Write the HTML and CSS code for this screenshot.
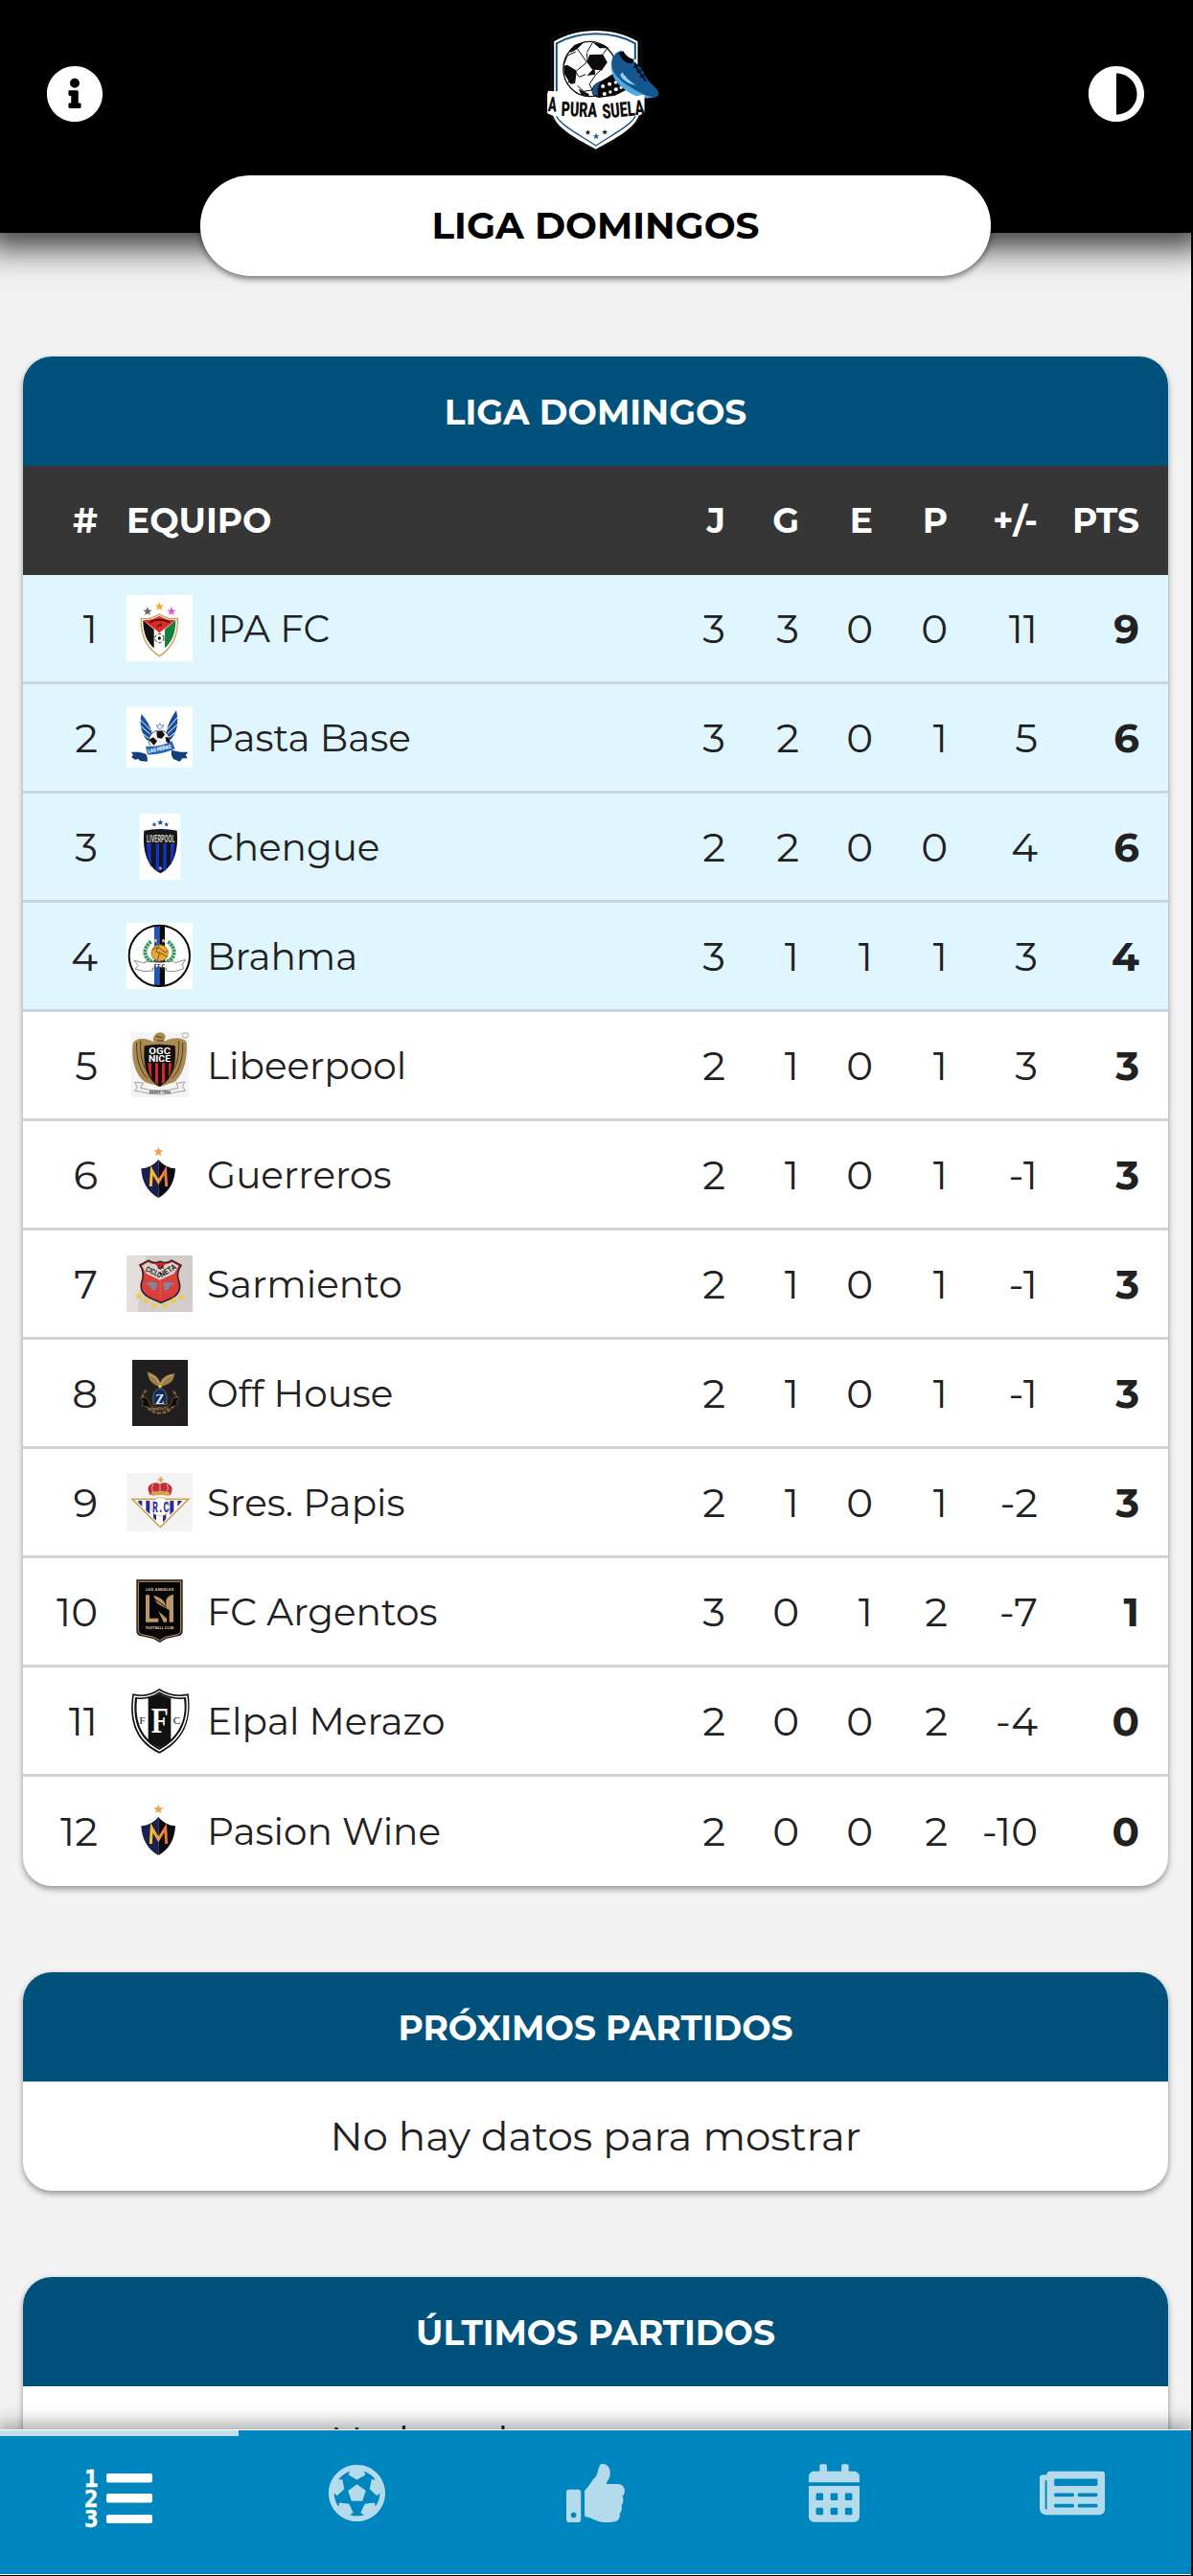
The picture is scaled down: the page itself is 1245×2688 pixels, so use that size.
FILE: index.html
```html
<!DOCTYPE html>
<html lang="es">
<head>
  <meta charset="UTF-8">
  <meta name="viewport" content="width=device-width, initial-scale=1.0">
  <title>A Pura Suela - Liga Domingos</title>
  <link rel="stylesheet" href="styles.css">
</head>
<body>
  <svg class="defs" width="0" height="0">
    <defs>
      <path id="star" d="M0-10L2.6-3.2 9.5-3.1 4 1.3 5.9 8.1 0 4.1-5.9 8.1-4 1.3-9.5-3.1-2.6-3.2z"/>
      <linearGradient id="gold" x1="0" x2="1"><stop offset="0" stop-color="#f6c52c"/><stop offset="1" stop-color="#e8743c"/></linearGradient>
      <symbol id="crest-m" viewBox="36 393 207 207">
        <rect x="36" y="393" width="207" height="207" fill="#fff"/>
        <use href="#star" transform="translate(136 426) scale(1.6)" fill="#f0a04a"/>
        <path d="M136 449C124 466 103 476 82 478c2 42 20 74 54 92z" fill="#1c2050"/>
        <path d="M136 449c12 17 32 27 53 29-2 42-19 74-53 92z" fill="#0b0b16"/>
        <path d="M112 534l3-50 21 36 22-36 3 50" fill="none" stroke="url(#gold)" stroke-width="9"/>
      </symbol>
    </defs>
  </svg>

  <div class="page">
    <header class="header">
      <svg class="header-icon" viewBox="0 0 512 512"><path d="M256 8C119.043 8 8 119.083 8 256c0 136.997 111.043 248 248 248s248-111.003 248-248C504 119.083 392.957 8 256 8zm0 110c23.196 0 42 18.804 42 42s-18.804 42-42 42-42-18.804-42-42 18.804-42 42-42zm56 254c0 6.627-5.373 12-12 12h-88c-6.627 0-12-5.373-12-12v-24c0-6.627 5.373-12 12-12h12v-64h-12c-6.627 0-12-5.373-12-12v-24c0-6.627 5.373-12 12-12h64c6.627 0 12 5.373 12 12v100h12c6.627 0 12 5.373 12 12v24z"/></svg>
      <svg class="logo" viewBox="-10.5 0 510 480">
        <path d="M244 57c-50 0-98 11-140 37v166l-12 4v60l12 4c12 46 80 82 140 114 60-32 128-68 140-114l12-4v-60l-10-4V94C342 68 294 57 244 57z" fill="#000" stroke="#2a211a" stroke-width="2"/>
        <path d="M244 66c-48 0-90 10-131 34v156l-19-2v72l16 6c14 40 70 70 134 105 64-35 120-65 134-105l16-8v-60l-19-4V100C334 76 292 66 244 66z" fill="#fff"/>
        <path d="M121 256V106c38-21 80-30 123-30s86 9 123 30v50" fill="none" stroke="#16528a" stroke-width="6"/>
        <path d="M120 334c20 32 70 56 124 92 54-36 104-60 124-92" fill="none" stroke="#16528a" stroke-width="4"/>
        <ellipse cx="225" cy="186" rx="83" ry="86" fill="#fff" stroke="#111" stroke-width="4"/>
        <path d="M224 141l42-1 14 25-18 26-31-5-15-22zM160 129l18-19 30-9-22 22-20 11zM234 103l32 6 20 12-30 0zM144 176l10-3 30 18-5 40-14 2-20-32zM216 207l24-26 2 22zM190 248l32 16 0 8-24-6z" fill="#0b0b0b"/>
        <path d="M186 123l30 42-32 26m34-25l-2-30m18-33l-18 30m64-12l-14 19m-8 51l-14 12-20 30 16 36m-28-66l-20 8-14-20m8 47l20 18 32-5m-72-37l-10 18m-13-58l12-30 26-12" fill="none" stroke="#111" stroke-width="3"/>
        <path d="M232 262c-4-20 10-32 30-39 20-10 32-22 44-24 10 0 16 6 18 14l20 36-40 20-50 7c-12-2-18-6-22-14z" fill="#05060a"/>
        <path d="M233 262c-2-18 8-30 26-36l-10 22 2 22c-10-1-15-4-18-8z" fill="#17578c"/>
        <g fill="#fff"><circle cx="266" cy="240" r="6"/><circle cx="287" cy="233" r="6"/><circle cx="306" cy="228" r="5"/><circle cx="271" cy="264" r="6"/><circle cx="289" cy="258" r="5"/><circle cx="307" cy="250" r="6"/><circle cx="323" cy="244" r="5"/></g>
        <path d="M294 158c2-10 12-26 30-30 6 14 16 24 36 30l26 26 22 38 28 28c10 16 4 26-16 26-28 0-50-12-72-26-26-14-42-32-50-56-6-12-6-24-4-36z" fill="#14568d"/>
        <path d="M292 166c2 34 26 56 62 78 26 16 48 28 70 30-24 10-62-4-84-20-34-20-52-54-48-88z" fill="#4ea7e2"/>
        <path d="M326 196c10 14 24 30 44 40-22-2-40-14-50-30z" fill="#8fd0f8"/>
        <path d="M316 136l14-6c8 14 18 22 34 27l-6 10c-18 4-34-8-42-31z" fill="#08090d"/>
        <path d="M366 168l12 26 12 12 10 18m-36-42l18-12m-10 26l20-10m-10 26l18-10" stroke="#07121f" stroke-width="6" fill="none"/>
        <path d="M92 260c90 24 210 24 304 6v54c-94 26-214 26-304 4z" fill="#fff"/>
        <g class="logo-text"><text x="95" y="319" textLength="26" lengthAdjust="spacingAndGlyphs" transform="rotate(4 108 300)">A</text><text x="136" y="335" textLength="112" lengthAdjust="spacingAndGlyphs" transform="rotate(2 190 310)">PURA</text><text x="264" y="335" textLength="132" lengthAdjust="spacingAndGlyphs" transform="rotate(-6 330 320)">SUELA</text></g>
        <use href="#star" transform="translate(219 385) scale(.9)" fill="#111"/>
        <use href="#star" transform="translate(245 397) scale(1.1)" fill="#1b5c9b"/>
        <use href="#star" transform="translate(272 384) scale(.9)" fill="#111"/>
      </svg>
      <svg class="header-icon" viewBox="0 0 512 512"><path d="M8 256c0 136.966 111.033 248 248 248s248-111.034 248-248S392.966 8 256 8 8 119.033 8 256zm248 184V72c101.705 0 184 82.311 184 184 0 101.705-82.311 184-184 184z"/></svg>
    </header>

    <div class="league-name">LIGA DOMINGOS</div>

    <main class="content">
      <section class="card">
        <h2 class="card-title">LIGA DOMINGOS</h2>
        <table class="standings">
          <colgroup><col class="c-pos"><col class="c-team"><col class="c-j"><col class="c-g"><col class="c-g"><col class="c-j"><col class="c-dif"><col class="c-pts"></colgroup>
          <thead>
            <tr><th>#</th><th class="team">EQUIPO</th><th>J</th><th>G</th><th>E</th><th>P</th><th>+/-</th><th class="pts">PTS</th></tr>
          </thead>
          <tbody>
            <tr class="top"><td>1</td><td class="team"><div>
              <svg class="crest" viewBox="36 33 207 207"><path fill="#fff" d="M36 33h207v207H36z"/>
                <use href="#star" transform="translate(102 84) scale(1.5)" fill="#666"/><use href="#star" transform="translate(139 69) scale(1.5)" fill="#e2b52d"/><use href="#star" transform="translate(177 84) scale(1.5)" fill="#e05bc0"/>
                <path d="M139 92c-16 12-35 17-57 14-2 54 18 94 57 118 39-24 59-64 57-118-22 3-41-2-57-14z" fill="#fff" stroke="#c9a04e" stroke-width="4"/>
                <path d="M88 112l34 28v59c-22-20-34-46-34-87z" fill="#111"/><path d="M190 112l-34 28v59c22-20 34-46 34-87z" fill="#14803f"/>
                <path d="M88 111c20 1 37-4 51-13 14 9 31 14 51 13l-51 40z" fill="#df2a24"/><path d="M108 118q31-15 63 0" fill="none" stroke="#4b1110" stroke-width="6"/><path d="M131 132l14-9-2 8" fill="none" stroke="#111" stroke-width="3"/>
                <circle cx="139" cy="168" r="14" fill="#fff" stroke="#111" stroke-width="3" stroke-dasharray="9 6"/><circle cx="139" cy="168" r="5" fill="#111"/></svg>
              <span>IPA FC</span></div></td><td>3</td><td>3</td><td>0</td><td>0</td><td>11</td><td class="pts">9</td></tr>
            <tr class="top"><td>2</td><td class="team"><div>
              <svg class="crest" viewBox="36 375 207 207"><path fill="#fff" d="M36 383h207v189H36z"/>
                <path d="M83 405c-8 30 0 68 20 84l14-16c-3-26-16-46-34-68zM192 394c8 32 4 68-18 92l-14-16c3-28 16-54 32-76z" fill="#17509a"/>
                <path d="M78 422l34 34m-32-14l30 26m-27-4l24 18M197 414l-36 42m36-20l-32 30m28-6l-24 18" stroke="#fff" stroke-width="3"/>
                <path d="M130 438l4 12h14l5-12-8 6-4-10-5 10z" fill="none" stroke="#2f6cae" stroke-width="2"/>
                <circle cx="139" cy="489" r="33" fill="#f4f4f4" stroke="#222" stroke-width="2"/><path d="M130 460l18-2 8 12-10 12-14-3zM106 486l14-8 12 12-10 13zM158 476l12 4 2 18-12-6zM124 516h26l-8 6h-12z" fill="#111"/>
                <path d="M51 524h24l22 6c4 8 6 16 4 24l-22-2-6-6-10 2-12-8 6-6zM229 524h-24l-28-6c-2 10 0 20 6 28l20 8 8-10h16l-6-10z" fill="#123f7c"/>
                <path d="M96 506q44 4 82-16l10 24q-44 20-86 18z" fill="#2467b5"/>
                <text font-family="Roboto" font-weight="900" font-size="17" fill="#fff" transform="rotate(-12 139 512)" x="102" y="520" textLength="74" lengthAdjust="spacingAndGlyphs">LAS HERAS</text></svg>
              <span>Pasta Base</span></div></td><td>3</td><td>2</td><td>0</td><td>1</td><td>5</td><td class="pts">6</td></tr>
            <tr class="top"><td>3</td><td class="team"><div>
              <svg class="crest" viewBox="36 27 207 207"><path fill="#fff" d="M77 27h128v207H77z"/>
                <g fill="#2444a5"><use href="#star" transform="translate(123 61) scale(.8)"/><use href="#star" transform="translate(142 55)"/><use href="#star" transform="translate(161 61) scale(.8)"/></g>
                <path d="M91 80q52-10 103 0c5 56-6 110-52 134C96 190 86 136 91 80z" fill="#12161f"/>
                <path d="M99 120h14v75q-12-20-14-75zM128 120h10v90l-10-7zM151 120h10v82l-10 7zM174 120h13q-2 50-13 68z" fill="#1733bd"/>
                <text x="99" y="116" font-family="Roboto" font-weight="700" font-size="32" fill="#d9d0b8" textLength="88" lengthAdjust="spacingAndGlyphs">LIVERPOOL</text><circle cx="142" cy="198" r="5" fill="#7fa3e0"/></svg>
              <span>Chengue</span></div></td><td>2</td><td>2</td><td>0</td><td>0</td><td>4</td><td class="pts">6</td></tr>
            <tr class="top"><td>4</td><td class="team"><div>
              <svg class="crest" viewBox="36 369 207 207"><path fill="#fff" d="M36 369h207v207H36z"/>
                <path d="M123 380h16v186h-16z" fill="#1f55c2"/><path d="M139 380h17v186h-17z" fill="#0a0a0a"/>
                <circle cx="139" cy="472" r="95" fill="none" stroke="#0a0a0a" stroke-width="6"/>
                <path d="M113 428c-30 22-22 58 10 64M166 428c30 22 22 58-10 64" fill="none" stroke="#2f9c50" stroke-width="12" stroke-dasharray="8 2"/>
                <use href="#star" transform="translate(127 425) scale(.8)" fill="#e6c890"/><use href="#star" transform="translate(152 425) scale(.8)" fill="#e6c890"/>
                <circle cx="140" cy="463" r="26" fill="#e4a936" stroke="#8a5b12" stroke-width="2"/><path d="M116 455q16-16 30-2t20 2M140 463l-8 24m6-48l-10 20 22 8 14 10" fill="none" stroke="#7a4d0c" stroke-width="3"/>
                <path d="M60 487l34 8 2-5q44 6 88-1l4 5 33-10-10 15 4 13q-32 14-56 6l2-7q-20-5-44 0l2 8q-30 6-56-6l10-10z" fill="#fff" stroke="#555" stroke-width="2"/>
                <text x="122" y="509" font-family="Roboto" font-weight="900" font-size="16" fill="#222" textLength="34">F.F.C</text></svg>
              <span>Brahma</span></div></td><td>3</td><td>1</td><td>1</td><td>1</td><td>3</td><td class="pts">4</td></tr>
            <tr><td>5</td><td class="team"><div>
              <svg class="crest" viewBox="36 51 207 207"><path fill="#f4f4f4" d="M50 51h182v204H50z"/>
                <path d="M119 72q6-20 22-20 16 2 17 14l-4 14c26-14 60-14 70 2 4 48-6 96-36 124l-46 16-48-14C64 184 50 140 56 86c10-18 38-20 66-4z" fill="#a98a53"/>
                <path d="M68 84c-2 50 10 88 34 112M80 78c-2 46 6 80 26 104M212 84c2 50-10 88-34 112M200 78c2 46-6 80-26 104M128 64l20 4m-16 10l20 0" fill="none" stroke="#4d3b1c" stroke-width="3"/>
                <path d="M92 94q48-10 96 0c4 56-4 104-49 128C96 198 88 150 92 94z" fill="#12100f"/>
                <path d="M103 148h11v50q-9-16-11-50zM126 148h9v68l-9-7zM147 148h9v58l-9 9zM168 148h10q-2 30-10 46z" fill="#cf2530"/>
                <g fill="#fff" font-family="Roboto" font-weight="700" font-size="28"><text x="106" y="121" textLength="68" lengthAdjust="spacingAndGlyphs">OGC</text><text x="105" y="143" textLength="69" lengthAdjust="spacingAndGlyphs">NICE</text></g>
                <path d="M62 208l26 2-8 16q60 16 118 0l-6-15 26-4-6 14 8 14-18 2q-62 18-124 0l-16-2 8-12z" fill="#f1f1f1" stroke="#777" stroke-width="2"/>
                <text x="107" y="244" font-family="Roboto" font-weight="700" font-size="13" fill="#333" textLength="66" lengthAdjust="spacingAndGlyphs">DESDE 1904</text><rect x="211" y="54" width="18" height="14" rx="5" fill="none" stroke="#888" stroke-width="2"/></svg>
              <span>Libeerpool</span></div></td><td>2</td><td>1</td><td>0</td><td>1</td><td>3</td><td class="pts">3</td></tr>
            <tr><td>6</td><td class="team"><div><svg class="crest"><use href="#crest-m"/></svg><span>Guerreros</span></div></td><td>2</td><td>1</td><td>0</td><td>1</td><td>-1</td><td class="pts">3</td></tr>
            <tr><td>7</td><td class="team"><div>
              <svg class="crest" viewBox="36 45 207 207"><path fill="#d3cccb" d="M36 60h207v177H36z"/><path fill="#e4dedc" d="M36 60h60L70 237H36z"/>
                <path d="M106 76q18 12 35 3 18 9 36-3l30 15q-16 24-8 46 14 38-24 58l-31 13-32-14q-42-20-26-58 6-26-8-46z" fill="#d9403d" stroke="#3b201d" stroke-width="5"/>
                <path d="M103 81q20 12 38 3 20 9 38-3l20 12-14 24-45 20-42-20-14-24z" fill="#dbd2cd"/>
                <path d="M124 84h36l-18 22z" fill="#c92b2b"/><text x="134" y="102" font-family="Roboto" font-weight="900" font-size="15" fill="#222">LA</text>
                <g font-family="Roboto" font-weight="700" font-size="24" fill="#272222"><text x="94" y="108" transform="rotate(26 94 108)" textLength="52" lengthAdjust="spacingAndGlyphs">CICLO</text><text x="146" y="130" transform="rotate(-32 146 130)" textLength="56" lengthAdjust="spacingAndGlyphs">NETA</text></g>
                <path d="M94 148l24-6 14 6-6 22-12-3-4-12zM188 148l-24-6-14 6 6 22 12-3 4-12z" fill="#84859a"/><path d="M141 136v52" stroke="#e9a03a" stroke-width="3" stroke-dasharray="4 6"/>
                <g fill="#f2cb2d"><use href="#star" transform="translate(74 188) scale(1.3)"/><use href="#star" transform="translate(98 202) scale(1.2)"/><use href="#star" transform="translate(124 217) scale(1.2)"/><use href="#star" transform="translate(156 217) scale(1.2)"/><use href="#star" transform="translate(182 202) scale(1.2)"/><use href="#star" transform="translate(208 190) scale(1.2)"/></g></svg>
              <span>Sarmiento</span></div></td><td>2</td><td>1</td><td>0</td><td>1</td><td>-1</td><td class="pts">3</td></tr>
            <tr><td>8</td><td class="team"><div>
              <svg class="crest" viewBox="36 387 207 207"><path fill="#201e1f" d="M54 387h174v207H54z"/>
                <path d="M101 424q34 10 40 34 8-24 46-29-2 28-28 37l-17 6-16-6q-22-12-25-42z" fill="#9d7d49"/><path d="M108 434q24 8 32 28m38-27q-24 8-34 28" fill="none" stroke="#d6b57c" stroke-width="3"/>
                <path d="M98 482q-22 20-4 42 12 26 46 30 34-4 46-28 16-22-6-44" fill="none" stroke="#80653b" stroke-width="7" stroke-dasharray="12 4"/>
                <path d="M120 526v-26q2-20 21-24 19 4 21 24v26z" fill="#122a64" stroke="#a18a57" stroke-width="2"/>
                <text x="127" y="526" font-family="Liberation Serif" font-weight="700" font-size="42" fill="#e7e7ea">Z</text>
                <path d="M80 504l20 2 10 24q32 12 64-2l8-22 20-2-8 14 2 10-18 6q-38 22-76 0l-18-4 4-12z" fill="#0c0a09" stroke="#77603a" stroke-width="2"/><text x="112" y="542" font-family="Roboto" font-weight="700" font-size="13" fill="#b5955a" textLength="58" lengthAdjust="spacingAndGlyphs">Zeppelin F.C.</text><circle cx="141" cy="470" r="5" fill="#d4d45a"/></svg>
              <span>Off House</span></div></td><td>2</td><td>1</td><td>0</td><td>1</td><td>-1</td><td class="pts">3</td></tr>
            <tr><td>9</td><td class="team"><div>
              <svg class="crest" viewBox="36 39 207 207"><path fill="#f3f3f4" d="M38 51h205v182H38z"/>
                <path d="M54 133h176l-88 88z" fill="#fff" stroke="#d0a65c" stroke-width="5"/>
                <path d="M73 138h12v18l-12-12zM97 138h12v42l-12-12zM120 176h9v24l-9-9zM150 180h10v14l-10 12zM172 138h12v32l-12 12zM196 138h14l-14 18z" fill="#272a9b"/>
                <circle cx="142" cy="157" r="29" fill="#fff" stroke="#d0a65c" stroke-width="2"/><text x="117" y="174" font-family="Liberation Mono" font-weight="700" font-size="50" fill="#272a9b" textLength="52" lengthAdjust="spacingAndGlyphs">R.C</text>
                <path d="M110 120q-16-28 8-36 12-5 22 2 14-8 26-1 20 8 8 35-32-10-64 0z" fill="#c22f39"/><path d="M120 112q-10-18 2-24m19 20V80m20 32q10-18 0-24" fill="none" stroke="#f4cdb2" stroke-width="4" stroke-dasharray="4 3"/>
                <path d="M112 112q30-8 60 0l-4 11q-26-6-52 0zM140 63h6v7h6v4h-6v7h-6v-7h-6v-4h6z" fill="#d9a24a"/></svg>
              <span>Sres. Papis</span></div></td><td>2</td><td>1</td><td>0</td><td>1</td><td>-2</td><td class="pts">3</td></tr>
            <tr><td>10</td><td class="team"><div>
              <svg class="crest" viewBox="36 381 207 207"><path fill="#fff" d="M36 381h207v207H36z"/>
                <path d="M67 385h145v160q0 14-14 17l-38 8-20 12-20-12-38-8q-15-3-15-17z" fill="#2b1d12"/><path d="M73 391h133v154q0 9-10 12l-38 8-18 10-18-10-38-8q-11-3-11-12z" fill="#050505" stroke="#bd9b6b" stroke-width="3"/>
                <g font-family="Roboto" font-weight="700" font-size="13" fill="#d8c09a"><text x="96" y="420" textLength="88">LOS ANGELES</text><text x="96" y="539" textLength="88" lengthAdjust="spacingAndGlyphs">FOOTBALL CLUB</text></g>
                <path d="M96 433h12v73h28v12H96zM120 434q34 8 40 34v-20q6-14 23-16v86h-13v-38l-38-20zM136 484l26 22v12h-10z" fill="#bd9567"/><path d="M122 444l40 28m-38-16l38 28m-28-10l28 22" stroke="#050505" stroke-width="3"/></svg>
              <span>FC Argentos</span></div></td><td>3</td><td>0</td><td>1</td><td>2</td><td>-7</td><td class="pts">1</td></tr>
            <tr><td>11</td><td class="team"><div>
              <svg class="crest" viewBox="36 33 207 207"><path fill="#fff" d="M36 33h207v207H36z"/>
                <path d="M139 36c-24 18-54 24-84 16-12 78 4 148 84 187 80-39 102-109 91-187-34 8-64 2-91-16z" fill="#111"/><path d="M139 42c-24 16-52 22-80 16-10 74 6 138 80 175 74-37 98-101 87-175-32 6-60 0-87-16z" fill="#fff"/><path d="M139 46c-22 16-48 21-76 17-8 68 6 128 76 165 70-37 92-97 83-165-30 4-58-1-83-17z" fill="#111"/>
                <path d="M139 52c-20 14-44 19-70 16-6 62 6 118 70 153 64-35 86-91 77-153-28 3-54-2-77-16z" fill="#fff"/><path d="M104 66q20-5 35-14 16 10 36 15v132q-14 13-36 22-20-9-35-22z" fill="#111"/>
                <g font-family="Liberation Serif"><text x="113" y="173" font-size="112" font-weight="700" fill="#fff" textLength="54" lengthAdjust="spacingAndGlyphs">F</text><g font-size="34" fill="#111"><text x="76" y="146">F</text><text x="182" y="146">C</text></g></g></svg>
              <span>Elpal Merazo</span></div></td><td>2</td><td>0</td><td>0</td><td>2</td><td>-4</td><td class="pts">0</td></tr>
            <tr><td>12</td><td class="team"><div><svg class="crest"><use href="#crest-m"/></svg><span>Pasion Wine</span></div></td><td>2</td><td>0</td><td>0</td><td>2</td><td>-10</td><td class="pts">0</td></tr>
          </tbody>
        </table>
      </section>

      <section class="card">
        <h2 class="card-title">PRÓXIMOS PARTIDOS</h2>
        <p class="empty">No hay datos para mostrar</p>
      </section>

      <section class="card">
        <h2 class="card-title">ÚLTIMOS PARTIDOS</h2>
        <p class="empty">No hay datos para mostrar</p>
      </section>
    </main>

    <nav class="tabs">
      <a class="tab active"><svg class="list" width="72" height="64" viewBox="0 0 72 64"><text x="0" y="20">1</text><text x="0" y="41">2</text><text x="0" y="62">3</text><rect x="23" y="6" width="48" height="9.500" rx="2"/><rect x="23" y="27" width="48" height="9.500" rx="2"/><rect x="23" y="49" width="48" height="9" rx="2"/></svg></a>
      <a class="tab"><svg width="61" height="61" viewBox="0 0 512 512"><path d="M504 256c0 136.967-111.033 248-248 248S8 392.967 8 256 119.033 8 256 8s248 111.033 248 248zm-48 0l-.003-.282-26.064 22.741-62.679-58.5 16.454-84.355 34.303 3.072c-24.889-34.216-60.004-60.089-100.709-73.141l13.651 31.939L256 139l-74.953-41.525 13.651-31.939c-40.631 13.028-75.78 38.87-100.709 73.141l34.565-3.073 16.192 84.355-62.678 58.5-26.064-22.741-.003.282c0 43.015 13.497 83.952 38.472 117.991l7.704-33.897 85.138 10.447 36.301 77.826-29.902 17.786c40.202 13.122 84.29 13.148 124.572 0l-29.902-17.786 36.301-77.826 85.138-10.447 7.704 33.897C442.503 339.952 456 299.015 456 256zm-248.102 69.571l-29.894-91.312L256 177.732l77.996 56.527-29.622 91.312h-96.476z"/></svg></a>
      <a class="tab"><svg width="61" height="61" viewBox="0 0 512 512"><path d="M104 224H24c-13.255 0-24 10.745-24 24v240c0 13.255 10.745 24 24 24h80c13.255 0 24-10.745 24-24V248c0-13.255-10.745-24-24-24zM64 472c-13.255 0-24-10.745-24-24s10.745-24 24-24 24 10.745 24 24-10.745 24-24 24zM384 81.452c0 42.416-25.97 66.208-33.277 94.548h101.723c33.397 0 59.397 27.746 59.553 58.098.084 17.938-7.546 37.249-19.439 49.197l-.11.11c9.836 23.337 8.237 56.037-9.308 79.469 8.681 25.895-.069 57.704-16.382 74.757 4.298 17.598 2.244 32.575-6.148 44.632C440.202 511.587 389.616 512 346.839 512l-2.845-.001c-48.287-.017-87.806-17.598-119.56-31.725-15.957-7.099-36.821-15.887-52.651-16.178-6.54-.12-11.783-5.457-11.783-11.998v-213.77c0-3.2 1.282-6.271 3.558-8.521 39.614-39.144 56.648-80.587 89.117-113.111 14.804-14.832 20.188-37.236 25.393-58.902C282.515 39.293 291.817 0 312 0c24 0 72 8 72 81.452z"/></svg></a>
      <a class="tab"><svg width="53" height="61" viewBox="0 0 448 512"><path fill-rule="evenodd" d="M0 464c0 26.500 21.500 48 48 48h352c26.500 0 48-21.500 48-48V192H0zM76 256h40q12 0 12 12v40q0 12-12 12H76q-12 0-12-12v-40q0-12 12-12zm128 0h40q12 0 12 12v40q0 12-12 12h-40q-12 0-12-12v-40q0-12 12-12zm128 0h40q12 0 12 12v40q0 12-12 12h-40q-12 0-12-12v-40q0-12 12-12zM76 384h40q12 0 12 12v40q0 12-12 12H76q-12 0-12-12v-40q0-12 12-12zm128 0h40q12 0 12 12v40q0 12-12 12h-40q-12 0-12-12v-40q0-12 12-12zm128 0h40q12 0 12 12v40q0 12-12 12h-40q-12 0-12-12v-40q0-12 12-12zM400 64h-48V16c0-8.800-7.200-16-16-16h-32c-8.800 0-16 7.200-16 16v48H160V16c0-8.800-7.200-16-16-16h-32c-8.800 0-16 7.200-16 16v48H48C21.500 64 0 85.500 0 112v48h448v-48c0-26.500-21.500-48-48-48z"/></svg></a>
      <a class="tab"><svg width="68" height="61" viewBox="0 0 576 512"><path fill-rule="evenodd" d="M552 64H88c-13.255 0-24 10.745-24 24v8H24c-13.255 0-24 10.745-24 24v272c0 30.928 25.072 56 56 56h472c26.510 0 48-21.490 48-48V88c0-13.255-10.745-24-24-24zM56 400a8 8 0 0 1-8-8V144h16v248a8 8 0 0 1-8 8zM140 352h152q12 0 12 12v8q0 12-12 12H140q-12 0-12-12v-8q0-12 12-12zm208 0h152q12 0 12 12v8q0 12-12 12H348q-12 0-12-12v-8q0-12 12-12zM140 256h152q12 0 12 12v8q0 12-12 12H140q-12 0-12-12v-8q0-12 12-12zm208 0h152q12 0 12 12v8q0 12-12 12H348q-12 0-12-12v-8q0-12 12-12zM140 128h360q12 0 12 12v40q0 12-12 12H140q-12 0-12-12v-40q0-12 12-12z"/></svg></a>
    </nav>
  </div>
</body>
</html>
```
FILE: styles.css
```css
* {
  box-sizing: border-box;
}
body {
  margin: 0;
  height: 2688px;
  overflow: hidden;
  background-color: #000;
  color: #212121;
  font-family: Montserrat, Inter, sans-serif;
}
.defs {
  position: absolute;
}
.page {
  display: flex;
  flex-direction: column;
  width: 1243px;
  height: 2687px;
  overflow: hidden;
  background-color: #f2f2f2;
}

/* header */
.header {
  display: flex;
  flex-shrink: 0;
  justify-content: space-between;
  align-items: flex-start;
  position: relative;
  height: 243px;
  padding: 10px 48px 0;
  background-color: #000;
  box-shadow: 0 0 32px 16px rgba(0,0,0,0.75);
}
.header-icon {
  width: 60px;
  height: 60px;
  margin-top: 58px;
  fill: #fff;
}
.logo {
  width: 170px;
  height: 160px;
}
.logo-text {
  font-family: Roboto, sans-serif;
  font-size: 64px;
  font-weight: 900;
  fill: #0b0b0b;
}
.league-name {
  position: relative;
  flex-shrink: 0;
  width: 825px;
  height: 105px;
  margin: -60px auto 0;
  border-radius: 52px;
  background: white;
  color: #000;
  font-size: 39px;
  font-weight: 700;
  line-height: 105px;
  text-align: center;
  box-shadow: 0 3px 6px rgba(0,0,0,0.5);
}

/* cards */
.content {
  flex: 1;
  min-height: 0;
  overflow: hidden;
  padding: 84px 24px 0;
}
.card {
  overflow: hidden;
  margin-bottom: 90px;
  border-radius: 30px;
  background: white;
  box-shadow: 0 3px 6px rgba(0,0,0,0.4);
}
.card-title {
  margin: 0;
  padding-top: 2px;
  background-color: #00527c;
  color: white;
  font-size: 36px;
  font-weight: 700;
  line-height: 112px;
  text-align: center;
}
.empty {
  margin: 0;
  font-size: 42px;
  line-height: 114px;
  text-align: center;
}

/* standings */
.standings {
  width: 100%;
  table-layout: fixed;
  border-collapse: separate;
  border-spacing: 0;
}
.c-pos { width: 78px; }
.c-team { width: 577px; }
.c-j { width: 78px; }
.c-g { width: 77px; }
.c-dif { width: 94px; }
.c-pts { width: 136px; }
.standings th, .standings td {
  height: 114px;
  padding: 0;
  text-align: right;
  white-space: nowrap;
}
.standings th {
  background-color: #363636;
  color: white;
  font-size: 36px;
  font-weight: 700;
}
.standings td {
  border-bottom: 3px solid #d3d3d3;
  font-size: 42px;
}
.standings .top td {
  background-color: #dff6ff;
  border-color: #c8d6dd;
}
.standings tr:last-child td {
  border-bottom: none;
}
.standings .team {
  padding-left: 30px;
  text-align: left;
}
.team div {
  display: flex;
  align-items: center;
  gap: 15px;
  font-size: 39px;
}
.standings .pts {
  padding-right: 30px;
  font-weight: 700;
}
.crest {
  width: 69px;
  height: 69px;
}

/* bottom tabs */
.tabs {
  display: flex;
  flex-shrink: 0;
  position: relative;
  height: 152px;
  border-top: 1px solid white;
  border-bottom: 1px solid white;
  background-color: #0086be;
  box-shadow: 0 0 20px 4px rgba(0,0,0,0.4);
}
.tab {
  flex: 1;
  padding-top: 29px;
  border-top: 6px solid transparent;
  text-align: center;
  fill: #b3dbeb;
}
.active {
  border-top-color: #c0e2f0;
  fill: white;
}
.list {
  margin-top: 4px;
  overflow: visible;
}
.list text {
  font-family: "DejaVu Sans Mono", monospace;
  font-size: 24px;
  font-weight: 700;
  stroke: white;
  stroke-width: 0.5px;
}
```
